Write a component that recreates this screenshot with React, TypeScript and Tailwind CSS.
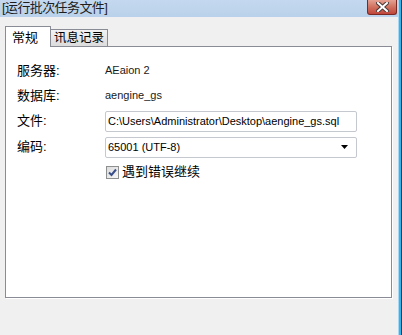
import { useState } from 'react'

const info = [
  { label: '服务器:', value: 'AEaion 2' },
  { label: '数据库:', value: 'aengine_gs' },
]

const tabs = ['常规', '讯息记录']

export default function App() {
  const [active, setActive] = useState(0)
  const [checked, setChecked] = useState(true)

  return (
    <div
      className="w-[402px] h-[335px] flex bg-[#f0f0f0] text-[12px] text-black overflow-hidden"
      style={{ fontFamily: '"Liberation Sans", "Noto Sans CJK SC", sans-serif' }}
    >
      <div className="flex-1 flex flex-col">
        {/* Title bar */}
        <div className="h-[17px] flex items-start justify-between bg-gradient-to-b from-[#c4d9ef] to-[#b9d1ea] pl-[2px] pr-[1px]">
          <span className="text-[13px] leading-[15px] text-[#1e1e1e] tracking-[-0.6px]">[运行批次任务文件]</span>
          <button className="w-[30px] h-[15px] rounded-b-[3px] border border-t-0 border-[#7a2a22] bg-gradient-to-b from-[#e5a192] via-[#d0715f] to-[#c0443a] flex items-center justify-center">
            <svg width="13" height="10" viewBox="0 0 13 10">
              <path d="M2 1 L11 9 M11 1 L2 9" stroke="#4a3a3a" strokeWidth="4" strokeLinecap="square" />
              <path d="M2 1 L11 9 M11 1 L2 9" stroke="#ffffff" strokeWidth="2" strokeLinecap="square" />
            </svg>
          </button>
        </div>

        {/* Tabs */}
        <div className="pl-[5px] pt-[9px] flex items-end">
          {tabs.map((t, i) => (
            <button
              key={t}
              onClick={() => setActive(i)}
              className={
                i === active
                  ? 'relative z-10 h-[21px] -mb-px pl-[6px] bg-white border border-b-0 border-[#898c95] text-[13px] leading-[19px] text-left whitespace-nowrap w-[46px]'
                  : 'h-[17px] pl-[3px] bg-gradient-to-b from-[#f2f2f2] to-[#dcdcdc] border border-l-0 border-b-0 border-[#898c95] text-[12.5px] leading-[16px] text-left whitespace-nowrap w-[57px]'
              }
            >
              {t}
            </button>
          ))}
        </div>

        {/* Panel */}
        <div className="ml-[5px] w-[387px] h-[252px] border border-[#898c95] bg-white shadow-[1px_1px_0_#ffffff] pl-[11px] pt-[11px]">
          <div className="flex flex-col">
            {info.map((r) => (
              <div key={r.label} className="flex items-center h-[25px]">
                <span className="w-[88px] text-[13px]">{r.label}</span>
                <span className="text-[11px] text-[#1a1a1a]">{r.value}</span>
              </div>
            ))}
            <div className="flex items-center mt-[2px] h-[22px]">
              <span className="w-[88px] text-[13px]">文件:</span>
              <input
                defaultValue="C:\Users\Administrator\Desktop\aengine_gs.sql"
                className="w-[252px] h-[21px] border border-[#c5c8cf] rounded-[2px] px-[2px] text-[11px] outline-none"
              />
            </div>
            <div className="flex items-center mt-[4px] h-[22px]">
              <span className="w-[88px] text-[13px]">编码:</span>
              <div className="w-[252px] h-[21px] border border-[#c5c8cf] rounded-[2px] px-[2px] flex items-center justify-between">
                <span className="text-[11px]">65001 (UTF-8)</span>
                <svg width="8" height="5" viewBox="0 0 8 5" className="mr-[5px]">
                  <path d="M0 0 H7 L3.5 4 Z" fill="#000" />
                </svg>
              </div>
            </div>
            <label className="flex items-center gap-[3px] mt-[6px] ml-[89px] h-[16px]">
              <span
                onClick={() => setChecked(!checked)}
                className="w-[13px] h-[13px] border border-[#8e8f8f] bg-gradient-to-br from-[#dcdcdc] to-[#f7f7f7] flex items-center justify-center"
              >
                {checked && (
                  <svg width="9" height="9" viewBox="0 0 9 9">
                    <path d="M1 4.5 L3.5 7 L8 1.5" stroke="#3a4e8a" strokeWidth="2" fill="none" />
                  </svg>
                )}
              </span>
              <span className="text-[13px]">遇到错误继续</span>
            </label>
          </div>
        </div>
      </div>
      <div className="w-[1px] bg-[#a9d6f0]" />
      <div className="w-[2px] bg-[#2fb6ec]" />
      <div className="w-[1px] bg-[#1c3950]" />
    </div>
  )
}
